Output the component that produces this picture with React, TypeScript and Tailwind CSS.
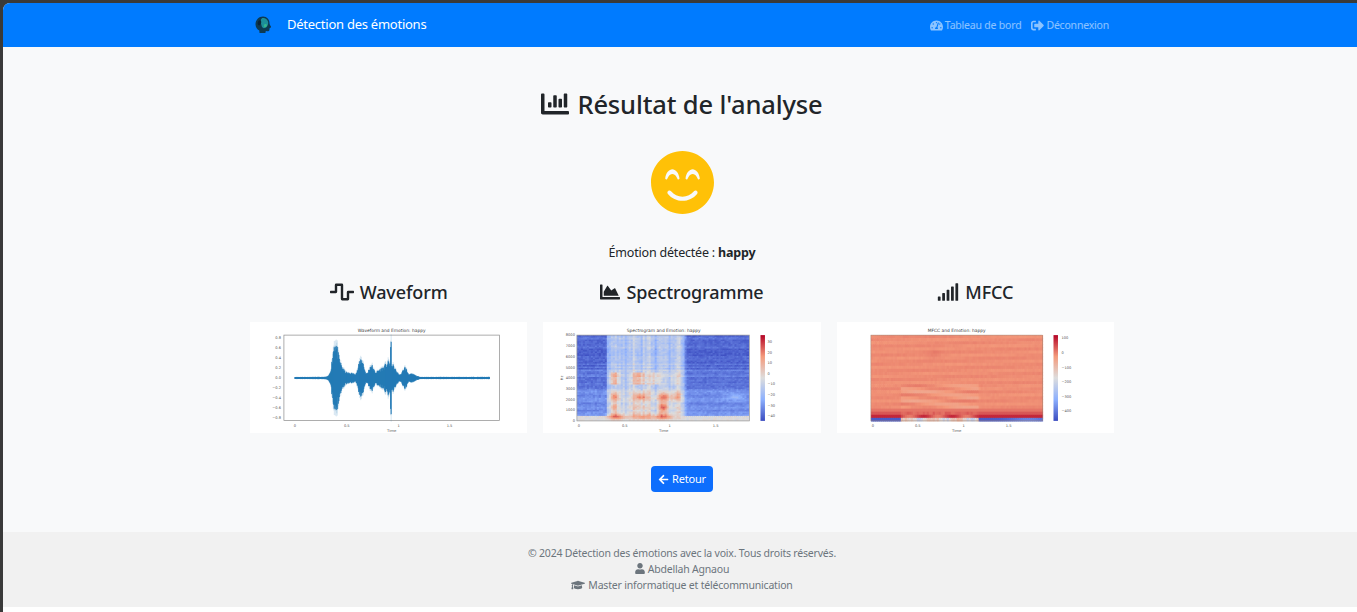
import { useMemo } from 'react';
import {
  FaArrowLeft,
  FaChartArea,
  FaChartBar,
  FaGraduationCap,
  FaSignal,
  FaSignOutAlt,
  FaSmileBeam,
  FaTachometerAlt,
  FaUser,
  FaWaveSquare,
} from 'react-icons/fa';

const chartFont = '"DejaVu Sans", sans-serif';

function seeded(seed: number) {
  let s = seed;
  return () => {
    s = (s * 16807) % 2147483647;
    return (s - 1) / 2147483646;
  };
}

const stops = [
  [59, 76, 192],
  [141, 176, 254],
  [221, 221, 221],
  [244, 154, 123],
  [180, 4, 38],
];

function coolwarm(v: number) {
  const t = Math.min(0.999, Math.max(0, v)) * 4;
  const i = Math.floor(t);
  const f = t - i;
  const c = stops[i].map((a, k) => Math.round(a + (stops[i + 1][k] - a) * f));
  return `rgb(${c[0]},${c[1]},${c[2]})`;
}

function bump(x: number, c: number, w: number) {
  return Math.exp(-((x - c) * (x - c)) / (2 * w * w));
}

function Tick({ x, y, children, anchor = 'middle' }: { x: number; y: number; children: string; anchor?: 'middle' | 'end' | 'start' }) {
  return (
    <text x={x} y={y} fontSize="3.6" fill="#555" textAnchor={anchor} fontFamily={chartFont}>
      {children}
    </text>
  );
}

function ChartFrame({ title, cx, children }: { title: string; cx: number; children: React.ReactNode }) {
  return (
    <svg viewBox="0 0 278 111" className="block h-[111px] w-full bg-white">
      <text x={cx} y="9.8" fontSize="4.4" fill="#444" textAnchor="middle" fontFamily={chartFont}>
        {title}
      </text>
      {children}
      <text x={cx} y="110.5" fontSize="3.8" fill="#555" textAnchor="middle" fontFamily={chartFont}>
        Time
      </text>
    </svg>
  );
}

function WaveformChart() {
  const lines = useMemo(() => {
    const r = seeded(11);
    const out: { x: number; a: number }[] = [];
    for (let x = 45; x <= 240; x += 0.5) {
      const t = (x - 45) / 104;
      let env = 0.014;
      env += 0.62 * bump(t, 0.385, 0.022) + 0.34 * bump(t, 0.42, 0.04);
      env += 0.09 * bump(t, 0.54, 0.045);
      env += 0.44 * bump(t, 0.64, 0.024) + 0.28 * bump(t, 0.735, 0.022);
      env += 0.12 * bump(t, 0.81, 0.03) + 0.36 * bump(t, 0.91, 0.05);
      env += 0.22 * bump(t, 1.06, 0.02) + 0.07 * bump(t, 1.13, 0.03);
      if (Math.abs(t - 0.925) < 0.006) env = 0.78;
      out.push({ x, a: env * (0.62 + 0.38 * r()) });
    }
    return out;
  }, []);
  const yTicks = ['0.8', '0.6', '0.4', '0.2', '0.0', '−0.2', '−0.4', '−0.6', '−0.8'];
  return (
    <ChartFrame title="Waveform and Emotion: happy" cx={142}>
      <rect x="34" y="13" width="216" height="85.5" fill="none" stroke="#8a8a8a" strokeWidth="0.7" />
      {lines.map((l) => (
        <line key={l.x} x1={l.x} x2={l.x} y1={56 - l.a * 56 - 0.2} y2={56 + l.a * 56 + 0.2} stroke="#1f77b4" strokeWidth="0.5" opacity="0.35" />
      ))}
      {lines.map((l) => (
        <line key={l.x} x1={l.x} x2={l.x} y1={56 - l.a * 46 - 0.5} y2={56 + l.a * 46 + 0.5} stroke="#1f77b4" strokeWidth="1" />
      ))}
      {yTicks.map((t, i) => (
        <Tick key={t} x={31} y={16.8 + i * 10.1} anchor="end">
          {t}
        </Tick>
      ))}
      <Tick x={45} y={105}>0</Tick>
      <Tick x={97} y={105}>0.5</Tick>
      <Tick x={149} y={105}>1</Tick>
      <Tick x={200} y={105}>1.5</Tick>
    </ChartFrame>
  );
}

function SpectrogramChart() {
  const cells = useMemo(() => {
    const r = seeded(29);
    const out: { x: number; y: number; c: string }[] = [];
    const rowNoise = Array.from({ length: 60 }, () => r());
    const colNoise = Array.from({ length: 90 }, () => r());
    for (let cx = 0; cx < 86; cx++) {
      for (let cy = 0; cy < 57; cy++) {
        const t = (cx * 2 - 2) / 91;
        const f = (1 - cy / 57) * 8000;
        const edge = Math.min(1, Math.max(0, (t - 0.29) / 0.02)) * Math.min(1, Math.max(0, (1.19 - t) / 0.07));
        let v = 0.01 + 0.07 * r() + 0.07 * rowNoise[cy];
        if (f < 4800) v += 0.03;
        if (f < 3000) v += 0.05;
        const active = 0.22 + 0.12 * colNoise[cx] + 0.05 * Math.sin(t * 36) + 0.03 * r();
        v += edge * active;
        v += 0.27 * edge * (f > 3500 && f < 4500 ? 1 : 0) * (bump(t, 0.38, 0.035) + bump(t, 0.65, 0.05) + 0.7 * bump(t, 0.83, 0.04) + 0.25 * bump(t, 1.05, 0.05));
        v += 0.33 * bump(f, 2300, 240) * (bump(t, 0.38, 0.035) + bump(t, 0.67, 0.055) + bump(t, 0.93, 0.06) + 0.6 * bump(t, 1.07, 0.04));
        v += 0.3 * bump(f, 1300, 380) * (0.8 * bump(t, 0.38, 0.025) + 0.4 * bump(t, 0.65, 0.05) + 1.2 * bump(t, 0.92, 0.04));
        if (f < 500) v = Math.max(v, 0.47 + 0.06 * r());
        v += 0.36 * bump(f, 420, 170) * (bump(t, 0.4, 0.06) + 0.65 * bump(t, 0.68, 0.09) + 0.9 * bump(t, 0.92, 0.07));
        v += 0.14 * bump(f, 2300, 180) * bump(t, 1.71, 0.07);
        out.push({ x: 34 + cx * 2, y: 13 + cy * 1.5, c: coolwarm(v) });
      }
    }
    return out;
  }, []);
  const yTicks = ['8000', '7000', '6000', '5000', '4000', '3000', '2000', '1000', '0'];
  const barTicks = ['30', '20', '10', '0', '−10', '−20', '−30', '−40'];
  return (
    <ChartFrame title="Spectrogram and Emotion: happy" cx={121}>
      <defs>
        <filter id="soft" x="0" y="0" width="100%" height="100%">
          <feGaussianBlur stdDeviation="0.5" />
        </filter>
        <linearGradient id="warm" x1="0" y1="1" x2="0" y2="0">
          <stop offset="0" stopColor="#3b4cc0" />
          <stop offset="0.25" stopColor="#8db0fe" />
          <stop offset="0.5" stopColor="#dddddd" />
          <stop offset="0.75" stopColor="#f49a7b" />
          <stop offset="1" stopColor="#b40426" />
        </linearGradient>
      </defs>
      <g filter="url(#soft)">
        {cells.map((c) => (
          <rect key={`${c.x}-${c.y}`} x={c.x} y={c.y} width="2.6" height="2.2" fill={c.c} />
        ))}
      </g>
      <rect x="34" y="13" width="173" height="86" fill="none" stroke="#9a9a9a" strokeWidth="0.7" />
      {yTicks.map((t, i) => (
        <Tick key={t} x={32} y={14.4 + i * 10.7} anchor="end">
          {t}
        </Tick>
      ))}
      <text x="0" y="0" fontSize="3.6" fill="#555" textAnchor="middle" fontFamily={chartFont} transform="translate(20 56) rotate(-90)">
        Hz
      </text>
      <Tick x={36} y={105}>0</Tick>
      <Tick x={82} y={105}>0.5</Tick>
      <Tick x={127} y={105}>1</Tick>
      <Tick x={173} y={105}>1.5</Tick>
      <rect x="218" y="13" width="4.5" height="86" fill="url(#warm)" />
      {barTicks.map((t, i) => (
        <Tick key={t} x={225} y={21 + i * 10.6} anchor="start">
          {t}
        </Tick>
      ))}
    </ChartFrame>
  );
}

function MfccChart() {
  const cells = useMemo(() => {
    const r = seeded(53);
    const out: { x: number; y: number; h: number; c: string }[] = [];
    const rows = 28;
    for (let cx = 0; cx < 86; cx++) {
      for (let cy = 0; cy < rows; cy++) {
        const t = (cx * 2 - 2) / 91;
        const d = rows - 1 - cy;
        const active = Math.min(1, Math.max(0, (t - 0.29) / 0.02)) * Math.min(1, Math.max(0, (1.17 - t) / 0.03));
        let v = 0.765 + 0.012 * Math.sin(cy * 2.3 + t * 3) + 0.012 * r();
        v += 0.025 * bump(cy, 5.5, 1.2) * bump(t, 0.67, 0.05);
        if (d < 12) v -= 0.04 * active * (0.5 + Math.sin(d * 1.9 + t * 6));
        if (d === 3) v = 0.81;
        if (d === 2) v = 0.86 - 0.05 * active * r();
        if (d === 1) v = 0.94 - 0.07 * active * (1 + Math.sin(t * 20));
        if (d === 0) v = active > 0.5 ? 0.46 + 0.14 * r() + 0.1 * Math.sin(t * 22) : 0.04 + 0.1 * bump(t, 1.7, 0.15);
        out.push({ x: 34 + cx * 2, y: 13 + cy * (86 / rows), h: 86 / rows + 0.6, c: coolwarm(v) });
      }
    }
    return out;
  }, []);
  const barTicks = [
    ['100', 17],
    ['0', 32],
    ['−100', 46.6],
    ['−200', 61.2],
    ['−300', 75.8],
    ['−400', 90.4],
  ] as const;
  return (
    <ChartFrame title="MFCC and Emotion: happy" cx={120}>
      <defs>
        <filter id="softer" x="0" y="0" width="100%" height="100%">
          <feGaussianBlur stdDeviation="0.6" />
        </filter>
        <linearGradient id="warm2" x1="0" y1="1" x2="0" y2="0">
          <stop offset="0" stopColor="#3b4cc0" />
          <stop offset="0.25" stopColor="#8db0fe" />
          <stop offset="0.5" stopColor="#dddddd" />
          <stop offset="0.75" stopColor="#f49a7b" />
          <stop offset="1" stopColor="#b40426" />
        </linearGradient>
      </defs>
      <g filter="url(#softer)">
        {cells.map((c) => (
          <rect key={`${c.x}-${c.y}`} x={c.x} y={c.y} width="2.6" height={c.h} fill={c.c} />
        ))}
      </g>
      <rect x="34" y="13" width="172" height="86" fill="none" stroke="#a08070" strokeWidth="0.5" />
      <Tick x={36} y={105}>0</Tick>
      <Tick x={81} y={105}>0.5</Tick>
      <Tick x={127} y={105}>1</Tick>
      <Tick x={172} y={105}>1.5</Tick>
      <rect x="217" y="13" width="4.5" height="86" fill="url(#warm2)" />
      {barTicks.map(([t, y]) => (
        <Tick key={t} x={225} y={y} anchor="start">
          {t}
        </Tick>
      ))}
    </ChartFrame>
  );
}

function Logo() {
  return (
    <svg viewBox="0 0 18 18" className="h-[18px] w-[18px]">
      <path d="M9 0.5c4 0 6.5 3 6.5 6.5 0 1.5.8 2.5 1.6 3.8.3.5-.4 1-1.4 1.2l-.4 2.2c-.2.9-1 1.2-1.8 1.1l-1.7-.2-.4 2H5.500l-.2-2.600C3 13.200 1.500 11 1.500 8.200 1.500 4 4.800 .5 9 .5z" fill="#0d3a52" />
      <path d="M9 2c3 0 5.200 2.200 5.200 5 0 2.600-1.600 4.500-3.400 5.100C9 12.700 7.800 11 7.500 9.500 7 7.500 6.500 5.500 7 3.500 7.300 2.600 8 2 9 2z" fill="#1c8f9a" />
      <path d="M5 4.500c1.500-.8 2.500.5 2.200 2-.3 1.800-1.500 3.200-2.700 2.800C3.200 8.500 3.500 5.400 5 4.500z" fill="#0a2338" />
      <path d="M11 8c1.400-.4 2.300.6 1.900 1.800-.4 1.100-1.700 1.700-2.600 1.100-.9-.7-.4-2.600.7-2.900z" fill="#35b58f" />
    </svg>
  );
}

export default function App() {
  return (
    <div className="h-[612px] w-[1357px] overflow-hidden bg-[#3a3a3a] pl-[3px] pt-[3px] font-['Noto_Sans',sans-serif] text-[#212529]">
      <div className="flex h-[609px] w-[1358px] flex-col overflow-hidden rounded-tl-[7px] bg-white">
        <nav className="h-[44px] shrink-0 bg-[#007bff]">
          <div className="mx-auto flex h-full w-[880px] items-center justify-between px-3">
            <div className="flex items-center gap-[15px]">
              <Logo />
              <span className="text-[13px] tracking-[-0.25px] text-white">Détection des émotions</span>
            </div>
            <div className="flex items-center gap-[10px] pt-px pr-px text-[10.5px] tracking-[-0.2px] text-white/55">
              <span className="flex items-center gap-[2px]">
                <FaTachometerAlt className="h-[13px] w-[13px]" />
                Tableau de bord
              </span>
              <span className="flex items-center gap-[2px]">
                <FaSignOutAlt className="h-[13px] w-[13px]" />
                Déconnexion
              </span>
            </div>
          </div>
        </nav>

        <main className="flex h-[485px] shrink-0 flex-col items-center bg-[#f8f9fa]">
          <h1 className="mt-[35px] flex h-[44px] items-center gap-2 text-[25.5px] font-medium tracking-[-0.15px]">
            <FaChartBar className="h-[28px] w-[28px]" />
            Résultat de l'analyse
          </h1>
          <FaSmileBeam className="mt-[24px] h-[65px] w-[63px] text-[#ffc107]" />
          <p className="mt-[28px] h-[20px] text-[12.5px] tracking-[-0.2px] leading-[20px]">
            Émotion détectée : <strong className="font-bold">happy</strong>
          </p>
          <div className="mt-[13px] grid w-[880px] grid-cols-3">
            <section className="px-2">
              <h3 className="flex h-[32px] items-center justify-center gap-[6px] text-[18px] font-medium tracking-[-0.1px]">
                <FaWaveSquare className="h-[24px] w-[24px]" />
                Waveform
              </h3>
              <div className="mt-[14px]">
                <WaveformChart />
              </div>
            </section>
            <section className="px-2">
              <h3 className="flex h-[32px] items-center justify-center gap-[6px] text-[18px] font-medium tracking-[-0.1px]">
                <FaChartArea className="h-[20px] w-[20px]" />
                Spectrogramme
              </h3>
              <div className="mt-[14px]">
                <SpectrogramChart />
              </div>
            </section>
            <section className="px-2">
              <h3 className="flex h-[32px] items-center justify-center gap-[6px] text-[18px] font-medium tracking-[-0.1px]">
                <FaSignal className="h-[22px] w-[22px]" />
                MFCC
              </h3>
              <div className="mt-[14px]">
                <MfccChart />
              </div>
            </section>
          </div>
          <button className="mt-[33px] flex h-[26px] w-[62px] items-center justify-center gap-[3px] rounded-[4px] bg-[#0d6efd] text-[11px] tracking-[-0.2px] text-white">
            <FaArrowLeft className="h-[11px] w-[11px]" />
            Retour
          </button>
        </main>

        <footer className="flex h-[75px] shrink-0 flex-col items-center justify-center bg-[#f1f1f1] pb-[2px] text-[10.5px] leading-[16px] tracking-[-0.2px] text-[#6c757d]">
          <p>© 2024 Détection des émotions avec la voix. Tous droits réservés.</p>
          <p className="flex items-center gap-[3px]">
            <FaUser className="h-[11px] w-[10px]" />
            Abdellah Agnaou
          </p>
          <p className="flex items-center gap-[3px]">
            <FaGraduationCap className="h-[14px] w-[14px]" />
            Master informatique et télécommunication
          </p>
        </footer>
      </div>
    </div>
  );
}
